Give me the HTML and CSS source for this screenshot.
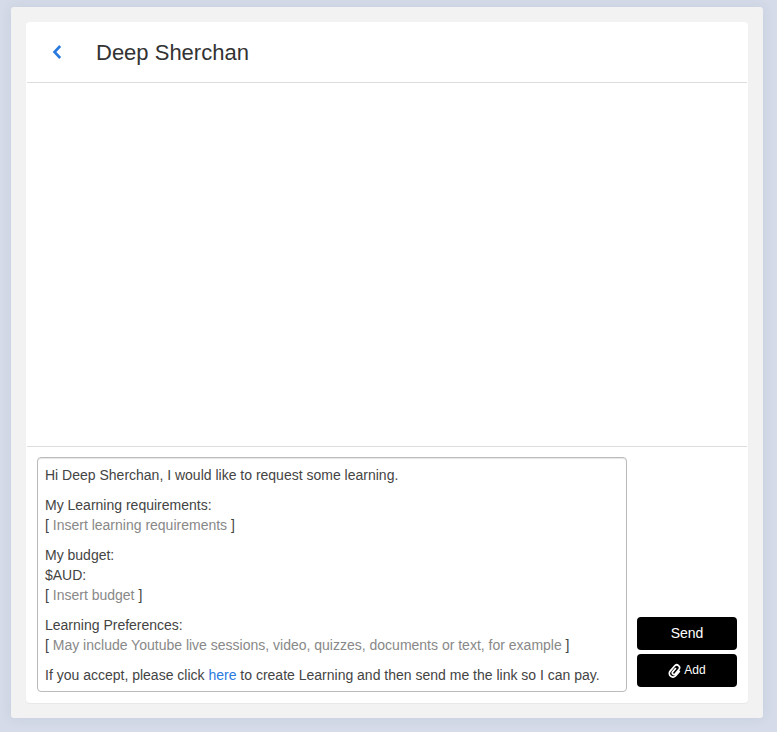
FILE: index.html
```html
<!DOCTYPE html>
<html lang="en">
<head>
	<meta charset="utf-8">
	<title>Messages - Deep Sherchan</title>
	<meta name="viewport" content="width=device-width, initial-scale=1">
	<link rel="stylesheet" href="styles.css">
</head>
<body>
	<main class="panel">
		<section class="chat">
			<header class="chat-header">
				<a class="back" href="#" aria-label="Back">
					<svg width="10" height="14" viewBox="0 0 10 14"><path d="M8.2 1L2.5 7L8.2 13" fill="none" stroke="currentColor" stroke-width="2.6"/></svg>
				</a>
				<h1 class="chat-title">Deep Sherchan</h1>
			</header>

			<div class="messages"></div>

			<form class="compose">
				<div class="editor" contenteditable="true" role="textbox" aria-multiline="true" aria-label="Message" spellcheck="false">
					<p>Hi Deep Sherchan, I would like to request some learning.</p>
					<p>My Learning requirements:<br>[ <span class="hint">Insert learning requirements</span> ]</p>
					<p>My budget:<br>$AUD:<br>[ <span class="hint">Insert budget</span> ]</p>
					<p>Learning Preferences:<br>[ <span class="hint">May include Youtube live sessions, video, quizzes, documents or text, for example</span> ]</p>
					<p>If you accept, please click <a href="#">here</a> to create Learning and then send me the link so I can pay.</p>
				</div>
				<div class="actions">
					<button class="btn" type="submit">Send</button>
					<button class="btn btn-small" type="button">
						<!-- paperclip -->
						<svg width="14" height="16" viewBox="0 0 14 16"><g transform="translate(0 2) rotate(40 7 7)" fill="none" stroke="currentColor" stroke-width="1.7" stroke-linecap="round"><path d="M10.6 4.5V10.2A3.6 3.6 0 0 1 3.4 10.2V3.4A2.8 2.8 0 0 1 9 3.4V9.6A1.7 1.7 0 0 1 5.8 9.6V4.8"/></g></svg>
						Add
					</button>
				</div>
			</form>
		</section>
	</main>
</body>
</html>
```
FILE: styles.css
```css
* {
	box-sizing: border-box;
}
body {
	margin: 0;
	min-height: 100vh;
	padding: 7px 14px 14px 11px;
	display: flex;
	background: #d5dbe8;
	color: #444;
	font: 14px/20px "Liberation Sans", Arial, sans-serif;
}
a {
	color: #2a7ade;
	text-decoration: none;
}

.panel {
	flex: 1;
	display: flex;
	padding: 15px;
	background: #f2f2f2;
	border-radius: 3px;
	box-shadow: 0 0 12px rgba(60, 90, 150, 0.1);
}
.chat {
	flex: 1;
	min-width: 0;
	display: flex;
	flex-direction: column;
	padding: 0 1px 1px;
	background: #fff;
	border-radius: 4px;
	box-shadow: 0 1px 1px rgba(0, 0, 0, 0.05);
}

/* header */
.chat-header {
	display: flex;
	align-items: center;
	gap: 34px;
	height: 61px;
	padding: 0 25px;
	border-bottom: 1px solid #ddd;
}
.back {
	display: flex;
}
.chat-title {
	margin: 0;
	padding-top: 2px;
	color: #333;
	font-size: 22px;
	line-height: 24px;
	font-weight: normal;
}

.messages {
	flex: 1;
}

/* message form */
.compose {
	display: flex;
	align-items: flex-end;
	gap: 10px;
	padding: 10px;
	border-top: 1px solid #ddd;
}
.editor {
	flex: 1;
	min-width: 0;
	padding: 7px 7px 6px;
	border: 1px solid #bbb;
	border-radius: 4px;
	box-shadow: inset 0 1px 1px rgba(0, 0, 0, 0.1);
}
.editor p {
	margin: 0 0 10px;
}
.editor p:last-child {
	margin-bottom: 0;
}
.hint {
	color: #888;
}
.actions {
	display: flex;
	flex-direction: column;
	gap: 4px;
	width: 100px;
	margin-bottom: 5px;
}
.btn {
	display: flex;
	align-items: center;
	justify-content: center;
	gap: 2px;
	height: 33px;
	padding: 0 0 2px;
	border: 0;
	border-radius: 4px;
	background: #000;
	color: #fff;
	font: inherit;
}
.btn-small {
	font-size: 12px;
}
```
